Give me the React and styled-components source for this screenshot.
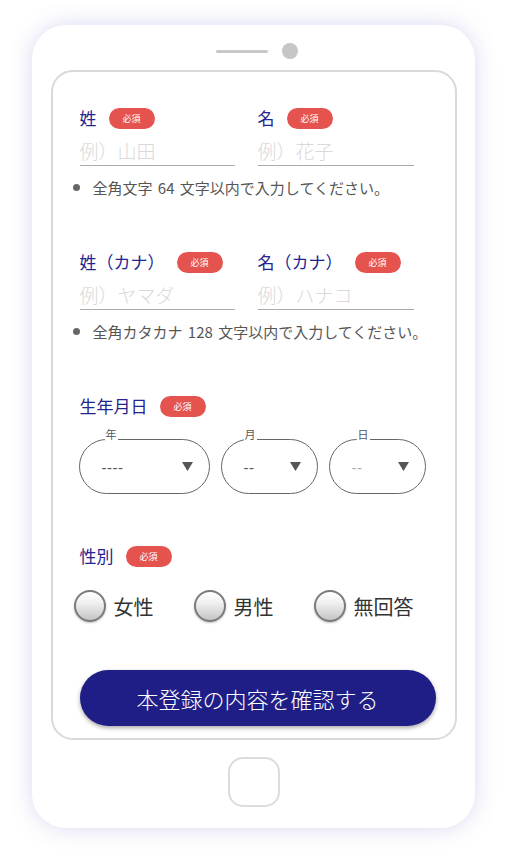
import React from 'react';
import styled, { createGlobalStyle } from 'styled-components';

const GlobalStyle = createGlobalStyle`
  body {
    margin: 0;
    background: #fff;
    font-family: "Noto Sans CJK JP", "Noto Sans", sans-serif;
  }
  * { box-sizing: border-box; }
`;

const Page = styled.div`
  padding: 25px 0 0 32px;
  height: 860px;
`;

const Phone = styled.div`
  width: 443px;
  height: 803px;
  background: #fff;
  border-radius: 34px;
  box-shadow: 0 0 22px rgba(110, 110, 200, 0.26);
  display: flex;
  flex-direction: column;
  align-items: center;
`;

const SpeakerRow = styled.div`
  margin-top: 18px;
  margin-left: 6px;
  height: 16px;
  display: flex;
  align-items: center;
  gap: 14px;
`;

const Speaker = styled.div`
  width: 52px;
  height: 3px;
  border-radius: 2px;
  background: #c8c8c8;
`;

const Camera = styled.div`
  width: 16px;
  height: 16px;
  border-radius: 50%;
  background: #c6c6c6;
`;

const Screen = styled.div`
  margin-top: 11px;
  width: 406px;
  height: 670px;
  border: 2px solid #d9d9d9;
  border-radius: 22px;
  padding: 36px 20px 0 27px;
  display: flex;
  flex-direction: column;
`;

const HomeButton = styled.div`
  margin-top: 17px;
  width: 52px;
  height: 50px;
  border: 2px solid #dcdcdc;
  border-radius: 15px;
`;

const Section = styled.div`
  margin-top: ${p => p.$top || 0}px;
`;

const FieldGrid = styled.div`
  display: grid;
  grid-template-columns: 155px 156px;
  column-gap: 23px;
`;

const LabelRow = styled.div`
  height: 21px;
  display: flex;
  align-items: center;
  gap: 12px;
`;

const Label = styled.span`
  font-size: 17px;
  line-height: 21px;
  margin-top: -3px;
  color: #24248e;
  font-weight: 400;
`;

const Badge = styled.span`
  width: 46px;
  height: 21px;
  border-radius: 11px;
  background: #e5534f;
  color: #fff;
  font-size: 9px;
  display: flex;
  align-items: center;
  justify-content: center;
`;

const TextInput = styled.input`
  display: block;
  width: 100%;
  height: 30px;
  margin-top: 7px;
  padding: 0;
  border: none;
  border-bottom: 1.5px solid #acacac;
  font-family: inherit;
  font-size: 19px;
  font-weight: 300;
  color: #333;
  outline: none;
  background: transparent;
  &::placeholder { color: #d9d9d9; }
`;

const Note = styled.div`
  margin-top: 13px;
  height: 16px;
  display: flex;
  align-items: center;
  margin-left: -7px;
  font-size: 15px;
  word-spacing: 2px;
  color: #555;
  &::before {
    content: "";
    width: 7px;
    height: 7px;
    border-radius: 50%;
    background: #666;
    margin-right: 13px;
  }
`;

const SelectRow = styled.div`
  margin-top: 11px;
  margin-left: -1px;
  display: flex;
  gap: 11px;
`;

const SelectBox = styled.fieldset`
  width: ${p => p.$w}px;
  min-width: 0;
  margin: 0;
  padding: 0;
  border: 1px solid #666;
  border-radius: 28px;
`;

const Legend = styled.legend`
  margin-left: ${p => p.$offset}px;
  padding: 0 1px 10px;
  font-size: 11px;
  line-height: 12px;
  color: #555;
`;

const SelectInner = styled.div`
  height: 54px;
  display: flex;
  align-items: center;
  justify-content: space-between;
  padding: 0 16px 0 22px;
  margin-top: -11px;
`;

const SelectValue = styled.span`
  font-family: "Liberation Sans", sans-serif;
  font-size: 15px;
  letter-spacing: 0.5px;
  color: ${p => (p.$muted ? '#aaa' : '#555')};
  padding-top: 3px;
`;

const RadioRow = styled.div`
  margin-top: 23px;
  margin-left: -6px;
  display: grid;
  grid-template-columns: repeat(3, 120px);
`;

const RadioItem = styled.label`
  display: flex;
  align-items: center;
  gap: 8px;
  font-size: 20px;
  color: #333;
`;

const RadioCircle = styled.span`
  width: 32px;
  height: 32px;
  border-radius: 50%;
  border: 2px solid #7a7a7a;
  background: linear-gradient(180deg, #ffffff 0%, #f0f0f0 40%, #c4c4c4 100%);
  box-shadow: 0 1px 2px rgba(0, 0, 0, 0.25);
`;

const SubmitButton = styled.button`
  margin-top: 48px;
  width: 356px;
  height: 56px;
  border: none;
  border-radius: 28px;
  background: #1e1e86;
  color: #fff;
  font-family: inherit;
  font-size: 22px;
  font-weight: 300;
  box-shadow: 0 2px 4px rgba(0, 0, 0, 0.35);
`;

const Caret = () => (
  <svg width="11" height="9" viewBox="0 0 11 9">
    <polygon points="0,0 11,0 5.5,9" fill="#555" />
  </svg>
);

const Field = ({ label, placeholder }) => (
  <div>
    <LabelRow>
      <Label>{label}</Label>
      <Badge>必須</Badge>
    </LabelRow>
    <TextInput placeholder={placeholder} />
  </div>
);

const DateSelect = ({ legend, width, offset, value, muted }) => (
  <SelectBox $w={width}>
    <Legend $offset={offset}>{legend}</Legend>
    <SelectInner>
      <SelectValue $muted={muted}>{value}</SelectValue>
      <Caret />
    </SelectInner>
  </SelectBox>
);

export default function App() {
  return (
    <Page>
      <GlobalStyle />
      <Phone>
        <SpeakerRow>
          <Speaker />
          <Camera />
        </SpeakerRow>
        <Screen>
          <Section>
            <FieldGrid>
              <Field label="姓" placeholder="例）山田" />
              <Field label="名" placeholder="例）花子" />
            </FieldGrid>
            <Note>全角文字 64 文字以内で入力してください。</Note>
          </Section>

          <Section $top={57}>
            <FieldGrid>
              <Field label="姓（カナ）" placeholder="例）ヤマダ" />
              <Field label="名（カナ）" placeholder="例）ハナコ" />
            </FieldGrid>
            <Note>全角カタカナ 128 文字以内で入力してください。</Note>
          </Section>

          <Section $top={57}>
            <LabelRow>
              <Label>生年月日</Label>
              <Badge>必須</Badge>
            </LabelRow>
            <SelectRow>
              <DateSelect legend="年" width={131} offset={25} value="----" />
              <DateSelect legend="月" width={97} offset={22} value="--" />
              <DateSelect legend="日" width={97} offset={27} value="--" muted />
            </SelectRow>
          </Section>

          <Section $top={52}>
            <LabelRow>
              <Label>性別</Label>
              <Badge>必須</Badge>
            </LabelRow>
            <RadioRow>
              <RadioItem><RadioCircle />女性</RadioItem>
              <RadioItem><RadioCircle />男性</RadioItem>
              <RadioItem><RadioCircle />無回答</RadioItem>
            </RadioRow>
          </Section>

          <SubmitButton>本登録の内容を確認する</SubmitButton>
        </Screen>
        <HomeButton />
      </Phone>
    </Page>
  );
}
